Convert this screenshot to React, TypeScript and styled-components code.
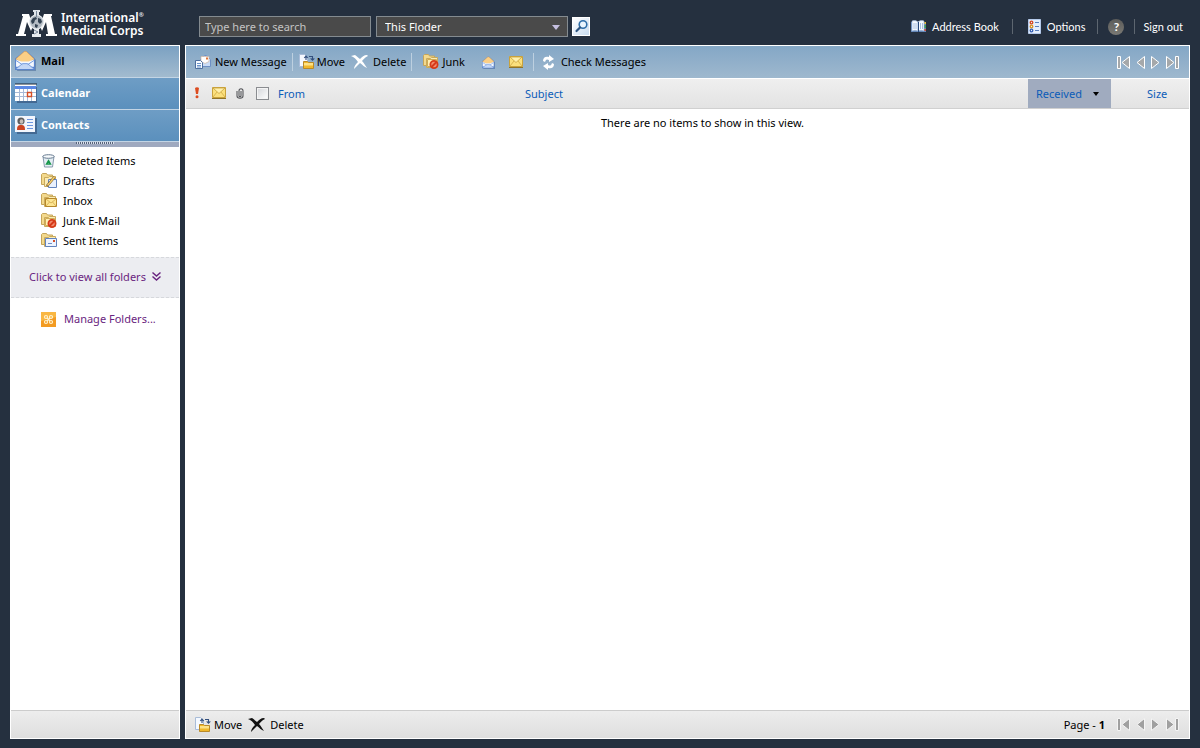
import React from 'react';
import styled, { createGlobalStyle } from 'styled-components';

const GlobalStyle = createGlobalStyle`
  * { box-sizing: border-box; }
  body {
    margin: 0;
    background: #25303f;
    color: #000;
    font-family: "Noto Sans", "Open Sans", sans-serif;
    font-size: 11px;
    line-height: 16px;
  }
  button, input, select { font: inherit; color: inherit; }
  svg { display: block; flex: none; overflow: visible; }
`;

const Page = styled.div`
  min-height: 100vh;
  display: flex;
  flex-direction: column;
  padding: 0 10px 9px;
`;

const Header = styled.header`
  height: 45px;
  display: flex;
  align-items: center;
  padding: 8px 7px 0 6px;
`;

const Brand = styled.a`
  width: 183px;
  display: flex;
  align-items: center;
  gap: 4px;
  padding-bottom: 6px;
  color: #fff;
  text-decoration: none;
`;

const BrandName = styled.span`
  display: flex;
  flex-direction: column;
  font: 600 12px/13px "Noto Sans", "Open Sans", sans-serif;
  white-space: nowrap;
`;

const BrandLine = styled.span`
  display: flex;
  small { font-size: 6px; line-height: 8px; }
`;

const SearchForm = styled.form`
  display: flex;
  align-items: center;
  gap: 4px;
`;

const SearchInput = styled.input`
  width: 172px;
  height: 21px;
  padding: 0 5px;
  background: #4a4a4a;
  border: 1px solid #848b90;
  border-radius: 0;
  margin-right: 1px;
  &::placeholder { color: #c4c4c4; opacity: 1; }
`;

const SelectWrap = styled.span`
  position: relative;
  display: block;
  svg { position: absolute; right: 8px; top: 9px; pointer-events: none; }
`;

const ScopeSelect = styled.select`
  display: block;
  width: 192px;
  height: 21px;
  padding: 0 8px;
  appearance: none;
  background: #4a4a4a;
  border: 1px solid #848b90;
  border-radius: 0;
  color: #fff;
`;

const SearchButton = styled.button`
  width: 18px;
  height: 19px;
  padding: 0;
  border: 1px solid #fff;
  background: linear-gradient(135deg, #fff, #c9dcf0);
  display: grid;
  place-items: center;
  cursor: pointer;
`;

const UserLinks = styled.nav`
  margin-left: auto;
  display: flex;
  align-items: center;
  font-family: Lato, "Open Sans", sans-serif;
`;

const UserLink = styled.a`
  display: flex;
  align-items: center;
  gap: 6px;
  color: #fff;
  text-decoration: none;
  white-space: nowrap;
`;

const UserDivider = styled.span<{ $before: number; $after: number }>`
  width: 1px;
  height: 15px;
  margin: 0 ${p => p.$after}px 0 ${p => p.$before}px;
  background: #5d6670;
`;

const Body = styled.div`
  flex: 1;
  display: flex;
  gap: 5px;
`;

const Sidebar = styled.aside`
  width: 170px;
  flex: none;
  display: flex;
  flex-direction: column;
  background: #fff;
  border: 1px solid #fff;
`;

const Module = styled.a<{ $active?: boolean }>`
  height: 32px;
  display: flex;
  align-items: center;
  gap: 5px;
  padding: 0 0 2px 4px;
  border-bottom: 1px solid #c3d5e5;
  background: ${p => (p.$active
    ? 'linear-gradient(#7ba1c2, #a2bbcf)'
    : 'linear-gradient(#6e9dc5, #5b90bd)')};
  color: ${p => (p.$active ? '#000' : '#fff')};
  font-family: "Open Sans", "Noto Sans", sans-serif;
  font-weight: 700;
  text-decoration: none;
`;

const ModuleIcon = styled.span`
  width: 21px;
`;

const Grip = styled.div`
  height: 5px;
  display: flex;
  justify-content: center;
  background: #9fa9bf;
  &::before {
    content: "";
    width: 38px;
    height: 2px;
    background: repeating-linear-gradient(90deg, #56637a 0 1px, #d8dde8 1px 2px);
  }
`;

const FolderList = styled.ul`
  margin: 0;
  padding: 4px 0 6px 30px;
  list-style: none;
`;

const FolderLink = styled.a`
  height: 20px;
  display: flex;
  align-items: center;
  gap: 6px;
  color: #000;
  text-decoration: none;
`;

const AllFolders = styled.button`
  height: 41px;
  display: flex;
  align-items: center;
  justify-content: center;
  gap: 6px;
  padding: 0 0 2px;
  border: 1px dashed #d6d8dc;
  border-width: 1px 0;
  background: #ecedf1;
  color: #6a2580;
  cursor: pointer;
`;

const ManageLink = styled.a`
  display: flex;
  align-items: center;
  gap: 8px;
  padding: 13px 0 0 30px;
  color: #6a2580;
  text-decoration: none;
`;

const bar = `
  height: 28px;
  border-top: 1px solid #ccc;
  background: linear-gradient(#ededed, #dedede);
`;

const SidebarFooter = styled.div`
  ${bar}
  margin-top: auto;
`;

const Main = styled.main`
  flex: 1;
  min-width: 0;
  display: flex;
  flex-direction: column;
  background: #fff;
  border: 1px solid #fff;
`;

const Toolbar = styled.div`
  height: 33px;
  display: flex;
  align-items: center;
  padding: 0 10px 0 9px;
  border-bottom: 1px solid #fff;
  background: linear-gradient(#84a7c6, #9eb8ce);
`;

const ToolButton = styled.button<{ $gap?: number }>`
  display: flex;
  align-items: center;
  gap: ${p => p.$gap ?? 4}px;
  padding: 0;
  border: 0;
  background: none;
  white-space: nowrap;
  cursor: pointer;
`;

const ToolDivider = styled.span`
  width: 1px;
  height: 18px;
  background: #bdd0e0;
`;

const Pager = styled.div`
  margin-left: auto;
  display: flex;
  align-items: center;
  gap: 6px;
`;

const PageLabel = styled.span`
  margin-right: 6px;
`;

const MessageTable = styled.table`
  width: 100%;
  table-layout: fixed;
  border-collapse: collapse;
`;

const HeadCell = styled.th<{ $w?: number; $sorted?: boolean; $indent?: number }>`
  width: ${p => (p.$w ? `${p.$w}px` : 'auto')};
  height: 29px;
  padding: 0 0 0 ${p => p.$indent ?? 2}px;
  border-bottom: 1px solid #d0d0d0;
  background: ${p => (p.$sorted ? '#a0abbf' : 'linear-gradient(#efefef, #e3e3e3)')};
  font-weight: 400;
  text-align: left;
`;

const SortButton = styled.button`
  display: flex;
  align-items: center;
  gap: 11px;
  padding: 1px 0 0;
  border: 0;
  background: none;
  color: #0b5cb8;
  cursor: pointer;
`;

const SelectAll = styled.input`
  display: block;
  width: 13px;
  height: 13px;
  margin: 0;
  appearance: none;
  border: 1px solid #8a8c90;
  background: linear-gradient(135deg, #d4d6da, #fff);
  box-shadow: inset 0 0 0 1px #f4f4f4;
`;

const EmptyCell = styled.td`
  padding: 6px 0 0 30px;
  text-align: center;
`;

const MainFooter = styled.footer`
  ${bar}
  margin-top: auto;
  display: flex;
  align-items: center;
  padding: 0 10px 0 9px;
`;

const Logo = () => (
  <svg width="41" height="28" viewBox="0 0 41 28">
    <path fill="#fff" d="M6 4h7l4 12-2 5-4-9-3 12h2v2H0v-2h2L7 6H6z" />
    <path fill="#fff" d="M36 4h-8l-4 12 2 5 4-9 2 12h-2v2h11v-2h-2L35 6h1z" />
    <path fill="#dfe4e9" d="M17 0h7v2h-1v3h-5V2h-1z" />
    <path fill="#e8ecef" d="M18 18h5v6h2v3h-9v-3h2z" />
    <circle cx="20.500" cy="12" r="7" fill="#b4bcc4" stroke="#e8ecef" strokeWidth="1.200" />
    <path fill="#334252" d="M15 11l2-3 3-1 1 2-2 1-1 3-2 1zM22 8l3 1 1 3-2 2-2-2zM19 14l3 1-1 3-2-1z" />
    <path d="M20.500 1v6M18 20l4 2-4 2" stroke="#78879a" fill="none" />
  </svg>
);

const Magnifier = () => (
  <svg width="15" height="15" viewBox="0 0 15 15" fill="none">
    <circle cx="9" cy="5.5" r="3.800" fill="#eaf5ff" stroke="#2f6ea9" strokeWidth="1.6" />
    <path d="M6 8.5L2.5 12" stroke="#2c5481" strokeWidth="2.2" strokeLinecap="round" />
  </svg>
);

const BookIcon = () => (
  <svg width="15" height="14" viewBox="0 0 15 14">
    <path fill="#6487b8" d="M0 2h15v10H0z" />
    <path fill="#f7fbff" stroke="#9fb9dc" strokeWidth=".6" d="M1 1c3-1 5 0 6 1v9c-2-1-4-1-6 0zM13 1c-3-1-5 0-6 1v9c2-1 4-1 6 0z" />
    <path d="M3 3v6M5 3v6M9.500 3v6M11.500 3v6" stroke="#a9c0e0" />
    <path d="M7.500 2v10" stroke="#27487c" />
    <path fill="#e9bc35" d="M13.500 2H15v2h-1.500z" /><path fill="#41a253" d="M13.500 5H15v3h-1.500z" /><path fill="#d24e35" d="M13.500 9H15v2h-1.500z" />
  </svg>
);

const OptionsIcon = () => (
  <svg width="13" height="15" viewBox="0 0 13 15">
    <path fill="#e4eefc" stroke="#b5caeb" d="M.5.5h12v14H.5z" />
    <path d="M7 3.500h4M7 7.500h4M7 11.500h4" stroke="#5a80bd" />
    <g fill="none" strokeWidth="1.300"><circle cx="3.500" cy="3.500" r="1.300" stroke="#d64822" /><circle cx="3.500" cy="7.500" r="1.300" stroke="#db9323" /><circle cx="3.500" cy="11.500" r="1.300" stroke="#355fb5" /></g>
  </svg>
);

const HelpBadge = styled.span`
  width: 16px;
  height: 16px;
  border-radius: 50%;
  background: linear-gradient(#5c5c5a, #7a7974);
  font-size: 12px;
  font-weight: 700;
  text-align: center;
`;

const OpenMail = ({ size }: { size: number }) => (
  <svg width={size} height={size} viewBox="0 0 20 20">
    <path fill="#4f6e99" opacity=".6" d="M2 9h18v11H2z" />
    <path fill="#5b85cd" d="M0 8l9-7h2l8 7v11H0z" />
    <path fill="#fbcf86" stroke="#e9a347" strokeWidth=".6" d="M.8 8.500l8-7h2l7.500 7-5 3.500H6z" />
    <path fill="#f4f8ff" d="M1 9l5 2h7l5-2v7H1z" />
    <path fill="#c4d7f6" d="M1 18l6-5h5l6 5z" />
    <path fill="none" stroke="#6f98dd" strokeWidth=".9" d="M1 10l6 4M18 10l-6 4M1 18l6-5h5l6 5" />
  </svg>
);

const CalendarIcon = () => (
  <svg width="22" height="20" viewBox="0 0 22 20">
    <path fill="#38577f" opacity=".7" d="M2 4h20v16H2z" />
    <path fill="#fff" d="M0 1h21v17H0z" />
    <path fill="#5a88e4" d="M0 3h21v3H0z" />
    <path d="M.5 1h21" stroke="#1d2735" strokeWidth="2" strokeDasharray="1 1" />
    <path d="M0 9.500h21M0 13.500h21M4.500 6v12M8.500 6v12M12.500 6v12M16.500 6v12" stroke="#a6bad7" />
    <path fill="#fff" stroke="#d64e24" strokeWidth="1.400" d="M12.500 9.500h4v4h-4z" />
  </svg>
);

const ContactsIcon = () => (
  <svg width="22" height="18" viewBox="0 0 22 18">
    <path fill="#38577f" opacity=".7" d="M2 2h20v16H2z" />
    <path fill="#f2f6fd" d="M0 0h20v16H0z" />
    <path d="M12 3.500h6M12 6.500h6M12 9.500h6M12 12.500h6" stroke="#6d97df" />
    <path fill="#cc4422" d="M2 14c0-4 1-5 4-5s4 1 4 5z" />
    <circle cx="6" cy="5" r="3.600" fill="#5d5e60" /><ellipse cx="6.500" cy="5.500" rx="1.800" ry="2.300" fill="#c5bdb6" />
  </svg>
);

const BinIcon = () => (
  <svg width="16" height="16" viewBox="0 0 16 16">
    <path fill="#e4edf4" stroke="#8799ab" d="M2 3.500h11l-1.500 10.500h-8z" />
    <ellipse cx="7.500" cy="3.500" rx="5.700" ry="1.800" fill="#f7fafc" stroke="#65798f" />
    <path fill="none" stroke="#16964a" strokeWidth="1.500" d="M7.500 7.700l1.900 3.300H5.600z" />
  </svg>
);

const FolderShape = () => (
  <>
    <path fill="#f3d98d" stroke="#c5a55a" d="M.5 11.500v-10l1-1h4l1 1.500h5v9.500z" />
    <path fill="#fbebb4" stroke="#c9aa5c" d="M3.500 13.500V4.500h4l1-1h6v10z" />
  </>
);

type FolderKind = 'drafts' | 'inbox' | 'junk' | 'sent';

const FolderIcon = ({ kind }: { kind: FolderKind }) => (
  <svg width="16" height="16" viewBox="0 0 16 16">
    <FolderShape />
    {kind === 'drafts' && <><path fill="#e8f0fd" stroke="#6384bd" d="M7.500 6.500h8v8h-8z" /><path d="M6 13L13.500 4" stroke="#6a4b20" strokeWidth="2.600" /><path d="M6.500 12.500l7-8.500" stroke="#f6cf6c" strokeWidth="1.600" /></>}
    {kind === 'inbox' && <><path fill="#fde591" stroke="#b6872a" d="M4.500 5.500h11v8h-11z" /><path d="M5 6l5 4 5-4M5 13l3.500-4M15 13l-3.500-4" fill="none" stroke="#d0a84c" strokeWidth=".8" /></>}
    {kind === 'junk' && <><path fill="#fff0b4" stroke="#d0ac55" d="M4.500 5.500h9v7h-9z" /><circle cx="11" cy="10.500" r="3.600" fill="#f28e70" stroke="#d63a18" strokeWidth="1.800" /><path d="M8.500 13l5-5" stroke="#d63a18" strokeWidth="2" /></>}
    {kind === 'sent' && <><path fill="#eef4ff" stroke="#6283bd" d="M4.500 5.500h11v8h-11z" /><path d="M7 10.500h4" stroke="#6f8fc8" /><path fill="#d44d27" d="M12 7h2v2h-2z" /></>}
  </svg>
);

const ChevronsDown = () => (
  <svg width="9" height="9" viewBox="0 0 9 9" fill="none" stroke="#6a2580" strokeWidth="1.500">
    <path d="M.5.500l4 3.500 4-3.500M.5 4.500l4 3.500 4-3.500" />
  </svg>
);

const ManageIcon = () => (
  <svg width="15" height="15" viewBox="0 0 15 15">
    <path fill="#f39b22" d="M0 0h15v15H0z" /><path fill="#f9b743" d="M0 0h15v5L0 9z" />
    <g fill="none" stroke="#fff3cf" strokeWidth="1.200"><circle cx="5" cy="5" r="1.500" /><circle cx="10" cy="5" r="1.500" /><circle cx="5" cy="10" r="1.500" /><circle cx="10" cy="10" r="1.500" /><path d="M6 6l3 3M9 6L6 9" /></g>
  </svg>
);

const NewMessageIcon = () => (
  <svg width="16" height="16" viewBox="0 0 16 16">
    <path fill="#c9dcf6" stroke="#6d8fc4" d="M4.500 6.500l5-5h2l4 4v7h-11z" />
    <path fill="#fff" stroke="#cdb4a4" strokeWidth=".7" d="M6 2.500h8v5l-4 2-4-2z" /><path fill="#e27435" d="M11 3.500h2v2h-2z" />
    <path fill="#f7fbff" stroke="#4d6f9f" d="M.5 6.500h5l2 2v6h-7z" /><path d="M2 9.500h4M2 11.500h4M2 13h4" stroke="#6a93c9" />
  </svg>
);

const MoveIcon = () => (
  <svg width="16" height="16" viewBox="0 0 16 16">
    <path fill="#f5f9ff" stroke="#a9bcd8" d="M.5.500h5l3 3v9h-8z" />
    <path fill="none" stroke="#34507e" strokeWidth="1.100" d="M7 6V2.500M5.200 4L7 2l1.800 2M10 2.500h3.500V6M11.700 4.300l1.800 2 1.800-2" />
    <path fill="#f0b82b" stroke="#b98a2a" d="M4.500 14.500v-7h4l1 1h5v6z" /><path fill="#fde287" d="M5 9h9v2.500H5z" />
  </svg>
);

const CrossIcon = ({ color }: { color: string }) => (
  <svg width="17" height="14" viewBox="0 0 17 14">
    <path fill={color} d="M0 1l4-1c2 1 3 3 5 4 2-2 4-4 7-4l1 1c-3 1-4 3-6 5 2 2 3 4 5 7-3-1-4-3-7-5-2 2-4 4-6 6 0-3 2-5 4-7C5 4 3 2 0 1z" />
  </svg>
);

const ClosedMail = () => (
  <svg width="14" height="12" viewBox="0 0 14 12">
    <path fill="#fbe07d" stroke="#c9a23c" d="M.5.500h13v10H.5z" />
    <path fill="#fff1ae" stroke="#c9a23c" strokeWidth=".8" d="M1 1h12L7 6.500z" /><path d="M1 10l4-5M13 10L9 5" stroke="#d0aa45" strokeWidth=".8" />
    <path d="M0 11.500h14" stroke="#8f7429" />
  </svg>
);

const RefreshIcon = () => (
  <svg width="13" height="15" viewBox="0 0 13 15" fill="#fff">
    <path d="M1 6c0-4 3-5 6-4V0l5 4-5 3V5C5 4 4 4 3 7z" />
    <path d="M12 9c0 4-3 5-6 4v2l-5-4 5-3v2c2 1 3 1 4-2z" />
  </svg>
);

const ImportanceIcon = () => (
  <svg width="6" height="12" viewBox="0 0 6 12" fill="#dc4c20"><path d="M1 1c1-1 3-1 4 0L4 7H2z" /><circle cx="3" cy="9.700" r="1.500" /></svg>
);

const ClipIcon = () => (
  <svg width="8" height="11" viewBox="0 0 8 11" fill="none" stroke="#55565a" strokeWidth="1.100">
    <path d="M1 3v5c0 3 6 3 6 0V3c0-3-4-3-4 0v5c0 1 2 1 2 0V3" />
  </svg>
);

const Triangle = ({ color }: { color: string }) => (
  <svg width="8" height="5" viewBox="0 0 8 5"><path fill={color} d="M0 0h8L4 5z" /></svg>
);

const CaretIcon = () => (
  <svg width="6" height="4" viewBox="0 0 6 4"><path fill="#000" d="M0 0h6L3 4z" /></svg>
);

const pagerShapes = [
  { name: 'First page', width: 13, d: 'M.5.500h3v12h-3zM12.500.5v12L5 6.500z' },
  { name: 'Previous page', width: 9, d: 'M8.500.5v12L1 6.500z' },
  { name: 'Next page', width: 9, d: 'M.5.5v12l7.500-6z' },
  { name: 'Last page', width: 13, d: 'M.5.5v12l7.500-6zM9.500.500h3v12h-3z' },
];

const PagerButtons = ({ muted }: { muted?: boolean }) => (
  <>
    {pagerShapes.map(s => (
      <ToolButton key={s.name} aria-label={s.name}>
        <svg width={s.width} height={13} viewBox={`0 0 ${s.width} 13`}>
          <path d={s.d} fill={muted ? '#a0a0a0' : '#a5a8aa'} stroke={muted ? '#f4f4f4' : '#fff'} />
        </svg>
      </ToolButton>
    ))}
  </>
);

const Spacer = styled.span<{ $w: number }>`
  width: ${p => p.$w}px;
  flex: none;
`;

const folders: { name: string; kind: FolderKind | 'deleted' }[] = [
  { name: 'Deleted Items', kind: 'deleted' },
  { name: 'Drafts', kind: 'drafts' },
  { name: 'Inbox', kind: 'inbox' },
  { name: 'Junk E-Mail', kind: 'junk' },
  { name: 'Sent Items', kind: 'sent' },
];

export default function App() {
  return (
    <Page>
      <GlobalStyle />
      <Header>
        <Brand href="#">
          <Logo />
          <BrandName>
            <BrandLine>International<small>®</small></BrandLine>
            <BrandLine>Medical Corps</BrandLine>
          </BrandName>
        </Brand>
        <SearchForm onSubmit={e => e.preventDefault()}>
          <SearchInput aria-label="Search" placeholder="Type here to search" />
          <SelectWrap>
            <ScopeSelect aria-label="Search scope"><option>This Floder</option></ScopeSelect>
            <Triangle color="#c5bfe0" />
          </SelectWrap>
          <SearchButton aria-label="Search"><Magnifier /></SearchButton>
        </SearchForm>
        <UserLinks>
          <UserLink href="#"><BookIcon />Address Book</UserLink>
          <UserDivider $before={13} $after={15} />
          <UserLink href="#"><OptionsIcon />Options</UserLink>
          <UserDivider $before={12} $after={10} />
          <UserLink href="#" aria-label="Help"><HelpBadge>?</HelpBadge></UserLink>
          <UserDivider $before={10} $after={8} />
          <UserLink href="#">Sign out</UserLink>
        </UserLinks>
      </Header>
      <Body>
        <Sidebar>
          <Module href="#" $active><ModuleIcon><OpenMail size={21} /></ModuleIcon>Mail</Module>
          <Module href="#"><ModuleIcon><CalendarIcon /></ModuleIcon>Calendar</Module>
          <Module href="#"><ModuleIcon><ContactsIcon /></ModuleIcon>Contacts</Module>
          <Grip />
          <FolderList>
            {folders.map(f => (
              <li key={f.name}>
                <FolderLink href="#">
                  {f.kind === 'deleted' ? <BinIcon /> : <FolderIcon kind={f.kind} />}
                  {f.name}
                </FolderLink>
              </li>
            ))}
          </FolderList>
          <AllFolders>Click to view all folders<ChevronsDown /></AllFolders>
          <ManageLink href="#"><ManageIcon />Manage Folders...</ManageLink>
          <SidebarFooter />
        </Sidebar>
        <Main>
          <Toolbar>
            <ToolButton><NewMessageIcon />New Message</ToolButton>
            <Spacer $w={5} /><ToolDivider /><Spacer $w={6} />
            <ToolButton $gap={2}><MoveIcon />Move</ToolButton>
            <Spacer $w={6} />
            <ToolButton $gap={5}><CrossIcon color="#fff" />Delete</ToolButton>
            <Spacer $w={5} /><ToolDivider /><Spacer $w={11} />
            <ToolButton $gap={3}><FolderIcon kind="junk" />Junk</ToolButton>
            <Spacer $w={17} />
            <ToolButton aria-label="Mark as read"><OpenMail size={13} /></ToolButton>
            <Spacer $w={14} />
            <ToolButton aria-label="Mark as unread"><ClosedMail /></ToolButton>
            <Spacer $w={10} /><ToolDivider /><Spacer $w={8} />
            <ToolButton $gap={6}><RefreshIcon />Check Messages</ToolButton>
            <Pager><PagerButtons /></Pager>
          </Toolbar>
          <MessageTable>
            <thead>
              <tr>
                <HeadCell $w={22} $indent={8} aria-label="Importance"><ImportanceIcon /></HeadCell>
                <HeadCell $w={22} $indent={4} aria-label="Type"><ClosedMail /></HeadCell>
                <HeadCell $w={20} $indent={6} aria-label="Attachment"><ClipIcon /></HeadCell>
                <HeadCell $w={26} $indent={6}><SelectAll type="checkbox" aria-label="Select all" /></HeadCell>
                <HeadCell $w={247}><SortButton>From</SortButton></HeadCell>
                <HeadCell><SortButton>Subject</SortButton></HeadCell>
                <HeadCell $w={83} $sorted $indent={8}><SortButton>Received<CaretIcon /></SortButton></HeadCell>
                <HeadCell $w={78} $indent={36}><SortButton>Size</SortButton></HeadCell>
              </tr>
            </thead>
            <tbody>
              <tr><EmptyCell colSpan={8}>There are no items to show in this view.</EmptyCell></tr>
            </tbody>
          </MessageTable>
          <MainFooter>
            <ToolButton $gap={3}><MoveIcon />Move</ToolButton>
            <Spacer $w={6} />
            <ToolButton $gap={5}><CrossIcon color="#111" />Delete</ToolButton>
            <Pager><PageLabel>Page - <b>1</b></PageLabel><PagerButtons muted /></Pager>
          </MainFooter>
        </Main>
      </Body>
    </Page>
  );
}
